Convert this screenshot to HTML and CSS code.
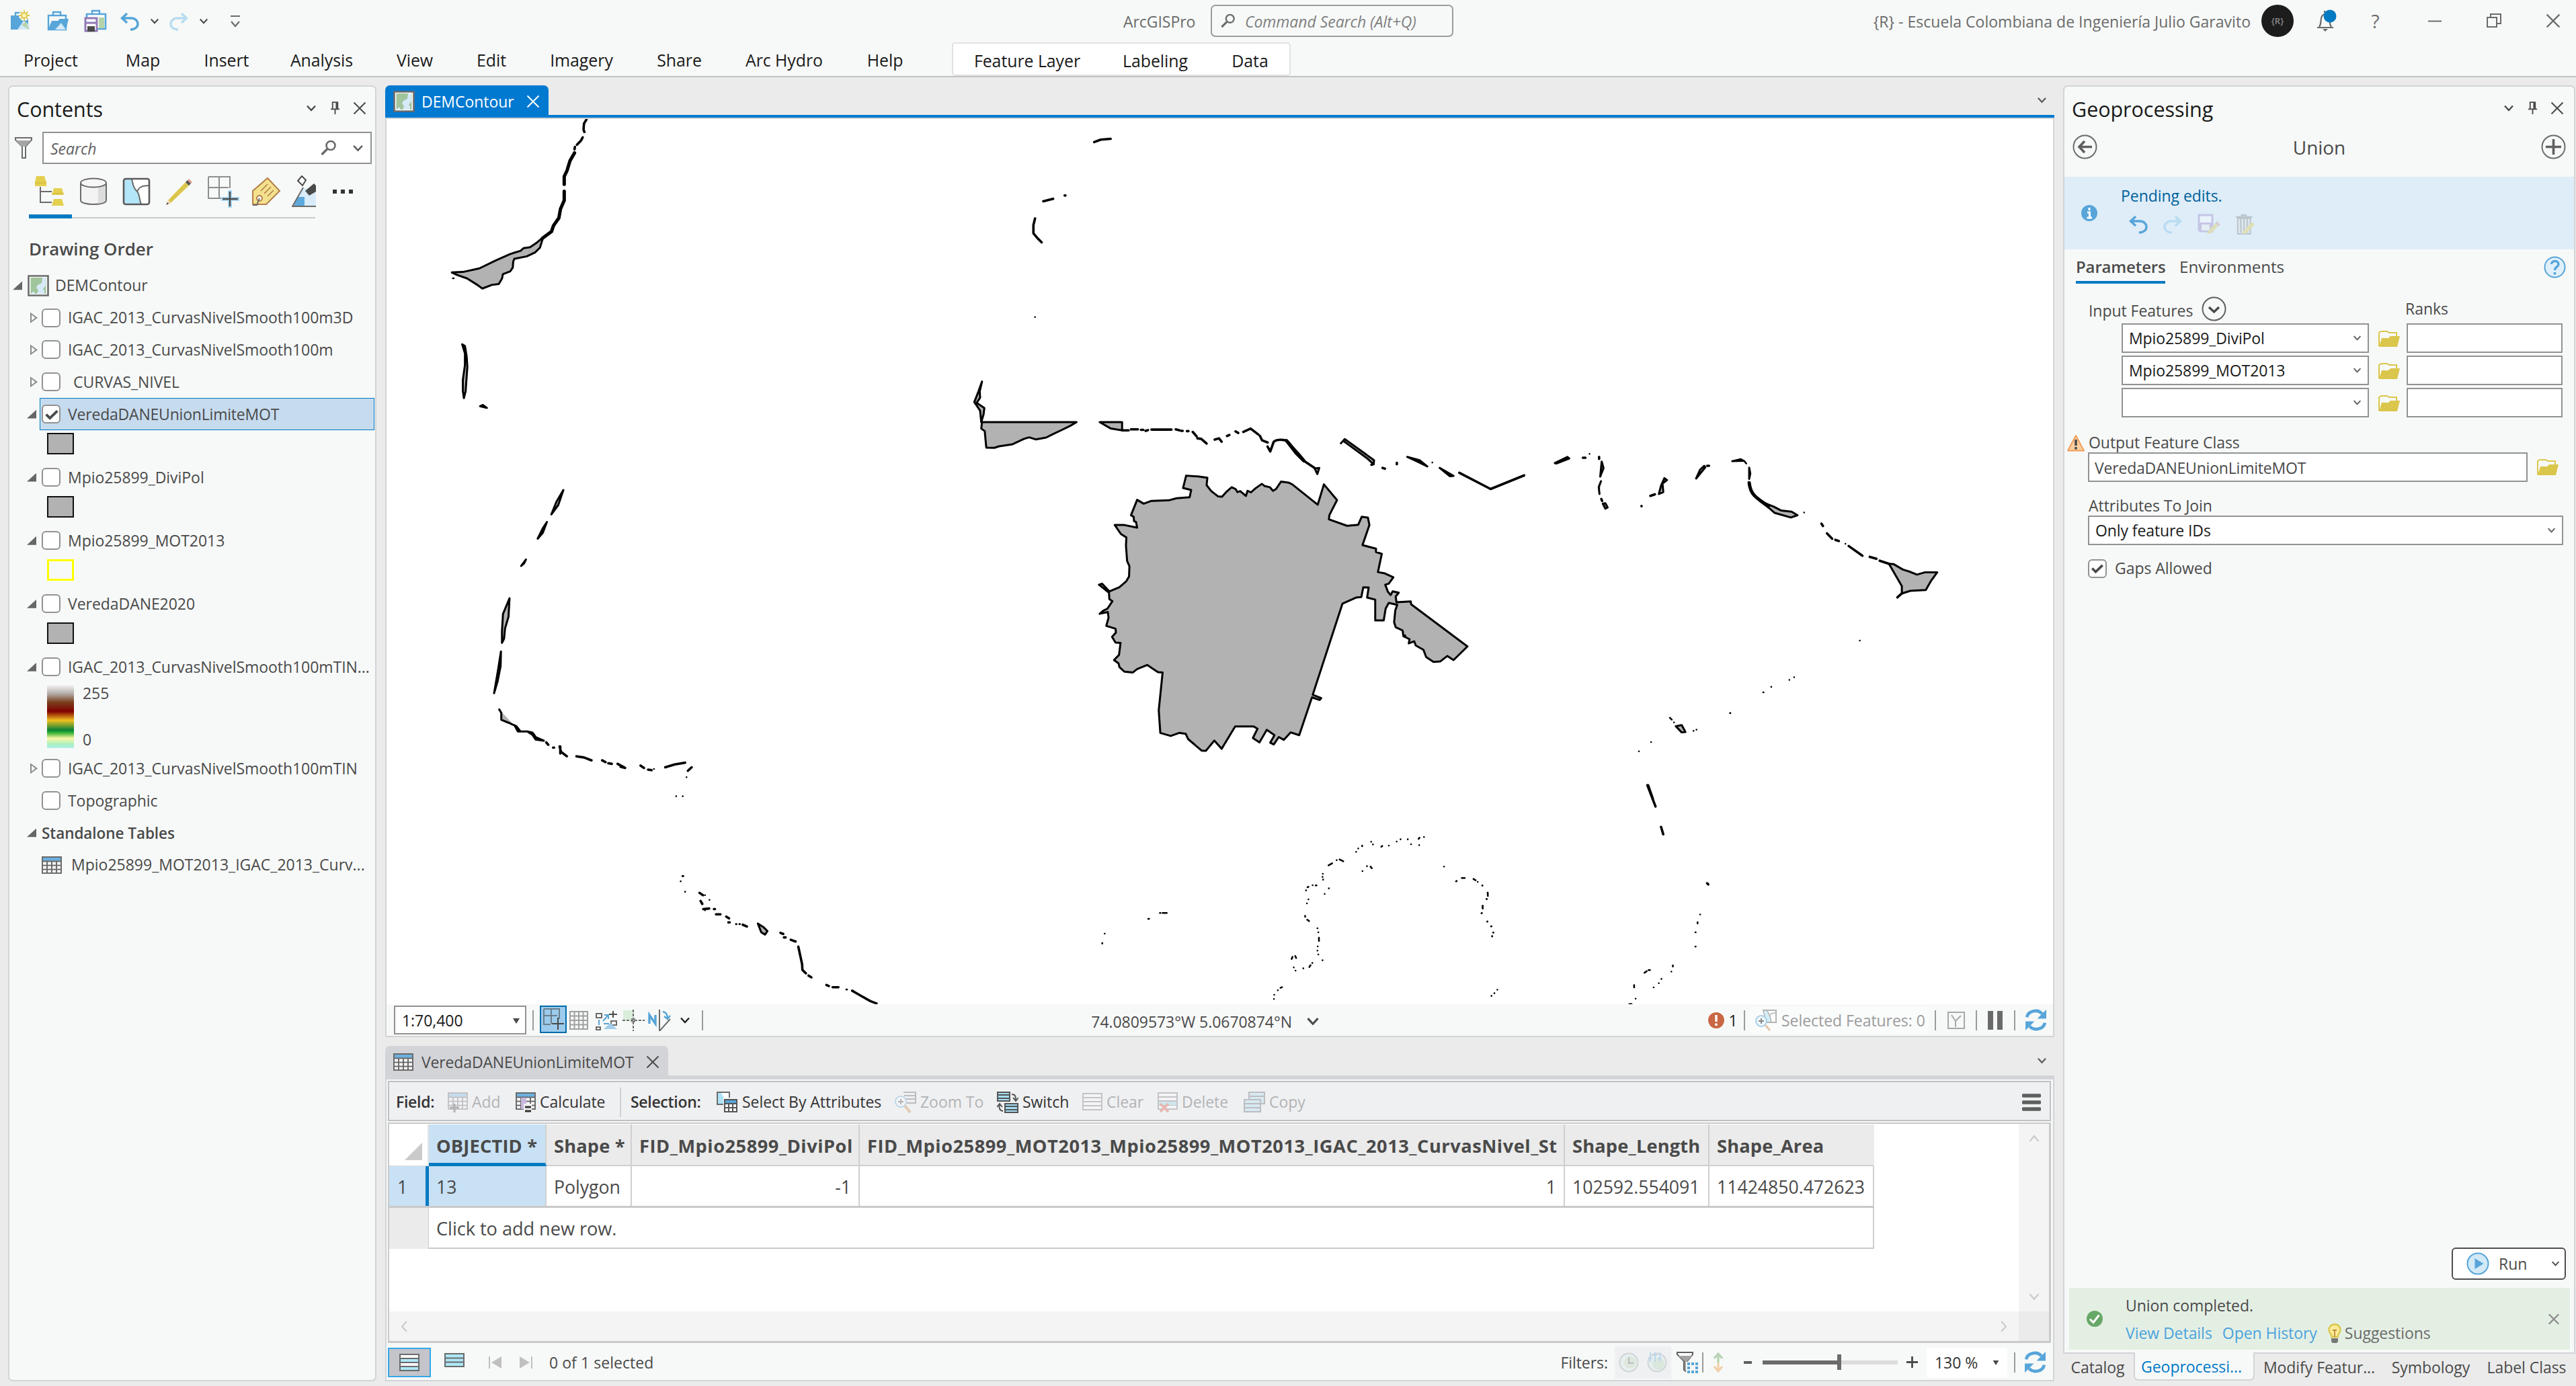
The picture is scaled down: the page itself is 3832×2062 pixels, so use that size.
FILE: index.html
```html
<!DOCTYPE html>
<html lang="en">
<head>
<meta charset="utf-8">
<title>ArcGISPro</title>
<link rel="stylesheet" href="styles.css">
</head>
<body>
<svg class="defs" aria-hidden="true">
  <symbol id="chev" viewBox="0 0 16 12"><path d="M2 2.5l6 6.5 6-6.5" fill="none" stroke="currentColor" stroke-width="2.4"/></symbol>
  <symbol id="close" viewBox="0 0 20 20"><path d="M1.5 1.5l17 17M18.5 1.5l-17 17" fill="none" stroke="currentColor" stroke-width="2"/></symbol>
  <symbol id="pin" viewBox="0 0 16 22"><path d="M4 12V2h8v10M1 13h14M8 13v8M10 2v10" fill="none" stroke="currentColor" stroke-width="2"/></symbol>
  <symbol id="caret" viewBox="0 0 10 8"><path d="M0 0h10L5 8z" fill="#4a4a4a"/></symbol>
  <symbol id="mag" viewBox="0 0 24 24"><circle cx="15" cy="8.500" r="6.500" fill="none" stroke="#6b6b6b" stroke-width="2.600"/><path d="M10 13.500L1.500 22" stroke="#6b6b6b" stroke-width="3.400"/></symbol>
  <symbol id="undo" viewBox="0 0 28 28"><path d="M10 2L2.500 9l7.500 7M3 9h13c13 0 14 17-1 17" fill="none" stroke="#57a5d9" stroke-width="3.400"/></symbol>
  <symbol id="redo" viewBox="0 0 28 28"><path d="M18 2l7.500 7-7.500 7M25 9H12C-1 9-2 26 13 26" fill="none" stroke="#b9dcf1" stroke-width="3.400"/></symbol>
  <symbol id="mapico" viewBox="0 0 32 32"><path d="M1.500 1.500h29v29h-29z" fill="#fff" stroke="#6b6b6b" stroke-width="2.600"/><path d="M4.500 4h23v24h-23z" fill="#a0c49c"/><path d="M22 4l-1 8-6 3-2 4 3 4-2 5h-3l-2-4-4 4h20v-5l-2-2 4-5V4z" fill="#d5e9f7"/></symbol>
  <symbol id="table" viewBox="0 0 30 26"><path d="M1 1h28v24H1z" fill="#fff"/><path d="M2 2h26v5H2z" fill="#6cb0e0"/><path d="M1 1h28v24H1zM1 7.500h28M1 13.500h28M1 19.500h28M8 7v18M15 7v18M22 7v18" fill="none" stroke="#6b6b6b" stroke-width="2"/></symbol>
  <symbol id="rows" viewBox="0 0 30 26"><path d="M1 1h28v24H1z" fill="#fff"/><path d="M1 1h28v24H1zM1 7h28M1 13h28M1 19h28" fill="none" stroke="#6b6b6b" stroke-width="2"/></symbol>
  <symbol id="folder" viewBox="0 0 32 26"><path d="M1 24V4l3-2h9l3 2h11v5" fill="none" stroke="#dbc64c" stroke-width="2"/><path d="M1 25L5 12h10l3-3h14l-4 16z" fill="#dbc64c"/></symbol>
  <symbol id="refresh" viewBox="0 0 32 32"><path d="M3 12C5 2 19 0 25 7" fill="none" stroke="#57a5d9" stroke-width="4.500"/><path d="M31 1v13H18z" fill="#57a5d9"/><path d="M29 20C27 30 13 32 7 25" fill="none" stroke="#57a5d9" stroke-width="4.500"/><path d="M1 31V18h13z" fill="#57a5d9"/></symbol>
  <symbol id="tick" viewBox="0 0 28 28"><path d="M5 13.500l6 6L23 8" fill="none" stroke="#4a4a4a" stroke-width="4.200"/></symbol>
</svg>

<header class="titlebar">
  <div class="quick">
    <svg width="32" height="32" viewBox="0 0 32 32"><path d="M2 8h26v21H2z" fill="#57a5d9"/><path d="M9 8V4h11v4" fill="none" stroke="#57a5d9" stroke-width="2.400"/><path d="M12 29l9-13 9 6v7z" fill="#d3e9f7"/><path d="M18 22l7-5 4 12z" fill="#b5d3a8"/><circle cx="22" cy="8" r="8" fill="#f7f9f8"/><circle cx="22" cy="8" r="4" fill="#fbf3b4" stroke="#dbc64c" stroke-width="2"/><path d="M22 0v3M22 13v3M14 8h3M27 8h3M16.500 2.500l2 2M27.500 2.500l-2 2M16.500 13.500l2-2M27.500 13.500l-2-2" stroke="#dbc64c" stroke-width="1.800"/></svg>
    <svg width="32" height="32" viewBox="0 0 32 32"><path d="M2 8h26v21H2z" fill="#f7f9f8" stroke="#57a5d9" stroke-width="2.400"/><path d="M9 8V3h11v5" fill="none" stroke="#57a5d9" stroke-width="2.400"/><path d="M1 30l6-14h9l3-3h13l-4 17z" fill="#57a5d9"/><path d="M12 29l9-10 7 10z" fill="#d3e9f7"/></svg>
    <svg width="34" height="34" viewBox="0 0 34 34"><path d="M4 7h28v22H4z" fill="#fff" stroke="#57a5d9" stroke-width="2.600"/><path d="M12 7V2h11v5" fill="none" stroke="#57a5d9" stroke-width="2.400"/><path d="M22 12h8v16h-8z" fill="#b5d3a8"/><path d="M2 13h17v19H2z" fill="#fff" stroke="#9179b8" stroke-width="3"/><path d="M3 20h15" stroke="#9179b8" stroke-width="3"/><path d="M5 25h11v8H5z" fill="#4a4a4a"/></svg>
    <svg class="qu" width="28" height="28"><use href="#undo"/></svg>
    <svg class="qc" width="14" height="11"><use href="#chev"/></svg>
    <svg class="qr" width="28" height="28"><use href="#redo"/></svg>
    <svg class="qc" width="14" height="11"><use href="#chev"/></svg>
    <svg class="qm" width="16" height="20" viewBox="0 0 16 20"><path d="M1 2h14M2 10l6 7 6-7" fill="none" stroke="#6b6b6b" stroke-width="2.200"/></svg>
  </div>
  <div class="command">
    <span>ArcGISPro</span>
    <div class="cmdsearch"><svg width="22" height="22"><use href="#mag"/></svg><em>Command Search (Alt+Q)</em></div>
  </div>
  <div class="account">
    <span>{R} - Escuela Colombiana de Ingeniería Julio Garavito</span>
    <b class="avatar">{R}</b>
    <i class="bell"><svg width="34" height="34" viewBox="0 0 34 34"><path d="M5 27h24M8 26c3-4 2-8 3-13 2-8 10-8 12 0 1 5 0 9 3 13M16 5V2" fill="none" stroke="#6b6b6b" stroke-width="2.200"/><path d="M13 29h8l-4 4z" fill="#6b6b6b"/><circle cx="24" cy="10" r="9.500" fill="#007ac2"/></svg></i>
    <i class="help">?</i>
    <i class="min"><svg width="20" height="3" viewBox="0 0 20 3"><path d="M0 1.500h20" stroke="#6b6b6b" stroke-width="2"/></svg></i>
    <i class="res"><svg width="22" height="22" viewBox="0 0 22 22"><path d="M1 6h14v14H1zM6 6V1h15v14h-6" fill="none" stroke="#6b6b6b" stroke-width="2"/></svg></i>
    <i class="cls"><svg width="22" height="22"><use href="#close"/></svg></i>
  </div>
</header>
<nav class="ribbon">
  <span>Project</span><span>Map</span><span>Insert</span><span>Analysis</span><span>View</span><span>Edit</span><span>Imagery</span><span>Share</span><span>Arc Hydro</span><span>Help</span>
  <div class="context"><span>Feature Layer</span><span>Labeling</span><span>Data</span></div>
</nav>

<main class="workspace">
  <aside class="pane contents">
    <div class="panehead"><h2>Contents</h2><svg width="16" height="12"><use href="#chev"/></svg><svg width="15" height="21"><use href="#pin"/></svg><svg width="20" height="20"><use href="#close"/></svg></div>
    <div class="searchrow">
      <svg width="28" height="34" viewBox="0 0 28 34"><path d="M2 2h24v3l-9 10v17h-5V15L2 5z" fill="#fff" stroke="#6b6b6b" stroke-width="2"/><path d="M3 6h22l-8 9h-6z" fill="#a5a5a5"/></svg>
      <div class="search"><em>Search</em><svg width="24" height="24"><use href="#mag"/></svg><svg width="17" height="13"><use href="#chev"/></svg></div>
    </div>
    <div class="views">
      <div class="active"><svg width="46" height="46" viewBox="0 0 46 46"><path d="M3 0h12l3 9v6H1V9zM29 18h12l3 10H26zM29 34h12l3 10H26z" fill="#e5cf4f"/><path d="M1 10h17M26 26h18" stroke="#c9b43e"/><path d="M9 16v23h17M9 23h17" fill="none" stroke="#6b6b6b" stroke-width="2"/></svg></div>
      <div><svg width="42" height="42" viewBox="0 0 42 42"><path d="M2 8v26c0 8 38 8 38 0V8" fill="#f3f3f3" stroke="#6b6b6b" stroke-width="2"/><path d="M28 14v25c7-1 11-3 11-6V10z" fill="#dcdcdc"/><ellipse cx="21" cy="8" rx="19" ry="6.500" fill="#f7f7f7" stroke="#6b6b6b" stroke-width="2"/></svg></div>
      <div><svg width="42" height="42" viewBox="0 0 42 42"><rect x="2" y="2" width="38" height="38" rx="3" fill="#fff"/><path d="M3 3h11c3 10 3 14 8 18 4 4 3 12 6 19H3z" fill="#b3e6f8"/><path d="M14 2c2 10 3 14 8 19 4 4 3 12 6 19M22 21c3-7 8-9 18-9" fill="none" stroke="#6b6b6b" stroke-width="2"/><rect x="2" y="2" width="38" height="38" rx="3" fill="none" stroke="#5a5a5a" stroke-width="2.600"/></svg></div>
      <div><svg width="42" height="42" viewBox="0 0 42 42"><path d="M4 34L31 6l5 5L8 38z" fill="#dbc64c"/><path d="M4 33l5 5-8 3z" fill="#f2d6b0"/><path d="M1 41l4-2-2-2z" fill="#444"/><path d="M30 7l3-3 5 5-3 3z" fill="#555"/><path d="M33 4l2-2 5 5-2 2z" fill="#e79a8c"/></svg></div>
      <div><svg width="48" height="48" viewBox="0 0 48 48"><path d="M2 2h32v17M2 2v32h20M2 18h30M18 2v32" fill="none" stroke="#8e8e8e" stroke-width="2"/><path d="M34 22v26M21 35h27" stroke="#abd9f5" stroke-width="6"/><path d="M34 24v22M23 35h23" stroke="#4a4a4a" stroke-width="2.400"/></svg></div>
      <div><svg width="44" height="44" viewBox="0 0 44 44"><path d="M2 21L24 2l18 19-20 20H2z" fill="#f3e18e" stroke="#b5804a" stroke-width="2"/><path d="M14 21l10-10M19 25l10-10M24 29l9-9" stroke="#b5804a" stroke-width="1.600"/><circle cx="12" cy="32" r="4" fill="#fff" stroke="#b5804a" stroke-width="2"/><path d="M12 32l-4 10-6 0" fill="none" stroke="#6b6b6b" stroke-width="2"/></svg></div>
      <div><svg width="36" height="48" viewBox="0 0 36 48"><path d="M17 19L2 46h34V19z" fill="#d9ebf8"/><path d="M9 32h10v13H3z" fill="#5da9dd"/><path d="M17 18L1 46h35" fill="none" stroke="#6b6b6b" stroke-width="2"/><path d="M15 1l6 6-5 8-7-7z" fill="#fff" stroke="#4a4a4a" stroke-width="2"/><path d="M20 23L33 12l3 3v9l-10 6z" fill="#4a4a4a"/></svg></div>
      <div><svg width="32" height="8" viewBox="0 0 32 8"><path d="M1 1h6v6H1zM13 1h6v6h-6zM25 1h6v6h-6z" fill="#333"/></svg></div>
    </div>
    <div class="viewline"><i></i></div>
    <h3>Drawing Order</h3>
    <ul class="tree">
      <li class="root"><i class="tri open"></i><svg width="32" height="32"><use href="#mapico"/></svg><span>DEMContour</span></li>
      <li><i class="tri shut"></i><i class="cb"></i><span>IGAC_2013_CurvasNivelSmooth100m3D</span></li>
      <li><i class="tri shut"></i><i class="cb"></i><span>IGAC_2013_CurvasNivelSmooth100m</span></li>
      <li><i class="tri shut"></i><i class="cb"></i><span class="pad">CURVAS_NIVEL</span></li>
      <li class="sel"><i class="tri open"></i><i class="cb"><svg width="26" height="26"><use href="#tick"/></svg></i><span>VeredaDANEUnionLimiteMOT</span></li>
      <li class="sw"><i></i></li>
      <li><i class="tri open"></i><i class="cb"></i><span>Mpio25899_DiviPol</span></li>
      <li class="sw"><i></i></li>
      <li><i class="tri open"></i><i class="cb"></i><span>Mpio25899_MOT2013</span></li>
      <li class="sw yellow"><i></i></li>
      <li><i class="tri open"></i><i class="cb"></i><span>VeredaDANE2020</span></li>
      <li class="sw"><i></i></li>
      <li><i class="tri open"></i><i class="cb"></i><span>IGAC_2013_CurvasNivelSmooth100mTIN...</span></li>
      <li class="ramp"><i></i><div><span>255</span><span>0</span></div></li>
      <li><i class="tri shut"></i><i class="cb"></i><span>IGAC_2013_CurvasNivelSmooth100mTIN</span></li>
      <li><i class="tri"></i><i class="cb"></i><span>Topographic</span></li>
      <li class="head"><i class="tri open"></i><span>Standalone Tables</span></li>
      <li class="tbl"><svg width="30" height="26"><use href="#table"/></svg><span>Mpio25899_MOT2013_IGAC_2013_Curv...</span></li>
    </ul>
  </aside>

  <section class="center">
    <div class="tabs maptabs"><div class="tab"><svg width="32" height="32"><use href="#mapico"/></svg><span>DEMContour</span><svg width="20" height="20"><use href="#close"/></svg></div><svg class="more" width="15" height="12"><use href="#chev"/></svg></div>
    <div class="mapview">
      <svg class="map" viewBox="575 177 2479 1317">
        <g class="shape" transform="translate(0 0) scale(.6122 .3571)">
          <path d="M1098 1135L1125 1133 1165 1118 1205 1085 1240 1058 1265 1045 1272 1034 1288 1030 1305 1010 1320 988 1316 1010 1312 1032 1300 1052 1280 1068 1250 1078 1247 1090 1246 1115 1240 1130 1222 1142 1220 1160 1212 1183 1195 1187 1172 1202 1160 1187 1135 1160 1110 1145z"/>
          <path class="l w5" d="M1318 993L1340 965 1345 940 1358 908 1362 870 1371 835 1371 797M1371 768L1371 735 1378 710 1385 670 1396 637"/>
          <path class="l" d="M1396 622l1-10M1402 603L1412 585 1416 572M1420 550L1418 540 1419 515 1425 498"/>
        </g>
        <g class="shape" transform="translate(560 160) scale(.5102 .861)">
          <path d="M250 409L258 412 263 430 265 448 260 490 255 502 252 490 252 470 258 445 258 425zM302 516L310 514 322 519z"/>
          <path d="M545 661L530 687 510 703 525 681zM497 716L485 735 470 745 484 728zM436 781L430 788 422 792zM388 848L385 880 375 900 372 918 366 925 366 905 369 875zM363 940L362 965 353 992 343 1012 355 970z"/>
          <path d="M358 1040L364 1046 364 1058 385 1063 408 1069 420 1078 412 1078 404 1069M420 1078L440 1078 455 1080 465 1088 488 1094 464 1092 455 1084 440 1078M1112 1410L1128 1416 1140 1423 1133 1429 1122 1425z"/>
          <path class="l" d="M495 1097l6 4M515 1106h3M534 1104L538 1113 555 1121M536 1104v12M583 1121L605 1123 627 1128M658 1128L668 1131M676 1133L686 1134M703 1134L725 1141 712 1139M770 1137L780 1141M792 1144L802 1145M842 1140L870 1135 900 1132M908 1146L919 1140"/>
          <path class="l" d="M942 1357L952 1361M945 1371l5 5M953 1385L970 1384M984 1385h3M990 1394h13M1020 1398l8 3M1026 1408h4M1068 1412L1080 1415M1178 1426l8 2M1188 1434l5 0M1208 1438L1222 1441M1230 1450L1241 1480 1242 1490 1252 1496M1260 1500l8 3M1312 1516l7 2M1330 1520h17M1387 1526L1410 1534 1440 1544 1458 1548"/>
          <path class="l s" d="M809 1143h0M904 1157h0M874 1190h0M893 1190h0M892 1328h3M887 1337h0M900 1355h0M958 1361h0M971 1369h0M958 1387h0M1048 1411h2M1058 1411h2M1370 1524h2M223 295h2"/>
        </g>
        <g class="shape" transform="scale(2.444)">
          <path class="l" d="M666 86.500L670 85 676 84.500M630 133l-1 4v5l2.500 3 2.500 2.500M635 122.500l6-1.500M648 119h.500"/>
          <path class="l s" d="M630 193h0"/>
        </g>
        <g class="shape" transform="translate(1400 540) scale(.574 .3827)">
          <path d="M106 230L351 230 335 244 316 258 288 278 272 290 245 297 228 289 215 295 185 316 150 324 138 330 117 329 113 265 104 255zM411 230H469V262L440 255z"/>
          <path d="M106 72L100 110 101 135 92 155 112 175 110 200 104 230 101 185 86 152 97 110z"/>
          <path d="M635 438L665 441 690 446 688 475 700 498 718 519 728 520 740 500 753 483 763 490 768 502 775 498 786 512 790 517 794 497 803 503 815 487 831 470 838 478 852 483 860 497 868 490 881 461 900 465 910 472 976 551 992 472 1026 533 1006 592 1005 608 1052 633 1081 629 1090 598 1106 601 1110 630 1092 708 1127 722 1127 735 1142 742 1132 813 1150 818 1172 833 1160 858 1151 862 1158 890 1165 902 1170 888 1186 893 1178 908 1180 930 1217 927 1218 938 1364 1102 1328 1155 1312 1139 1294 1160 1276 1162 1257 1143 1250 1115 1230 1098 1226 1082 1212 1090 1214 1074 1198 1062 1196 1040 1178 1027 1174 1008 1177 962 1182 940 1160 933 1152 955 1147 1001H1125V920L1104 912 1108 873 1094 872 1089 910 1075 912 1040 936 963 1290 985 1303 981 1310 961 1300 928 1447 906 1436 888 1465 875 1454 862 1483 853 1476 864 1447 844 1426 825 1475 808 1458 820 1422 810 1413H762L727 1500 708 1468 686 1508 675 1507 640 1462 634 1442 617 1438 595 1450 568 1438 564 1350 574 1203 562 1202 534 1174 508 1190 497 1203 475 1200 462 1182 460 1168 448 1155 461 1135 465 1088 452 1087 443 1065 453 1048 452 1033 428 1022 434 990 432 968 411 975 420 963 431 955 444 926 436 918 435 893 409 862 417 858 436 888 462 872 480 848 487 830 488 790 482 770 479 710 480 678 466 665 450 630 475 630 508 640 505 618 500 615 499 598 492 592 508 532 525 547 545 536 590 534 610 526 644 522 648 494 627 486z"/>
          <path class="l" d="M470 262H486M492 258H510M518 260H524M530 264l6-3M545 259H597M608 258L618 262M622 264h4M637 265H641M652 268L662 285M664 293l10 2 14 18M709 298L720 293 727 306M741 284l6-4M763 266l7 6M783 268L802 255 822 278M826 283l6 18 14 8M846 325L853 344 862 306C873 294 895 298 900 308L925 355 938 378 968 408"/>
          <path class="w5" d="M895 302L908 325 930 362 940 380 920 350z"/>
          <path d="M968 410L980 408 975 432z"/>
          <path d="M1036 312L1046 296 1122 378 1121 394 1105 372 1045 306M1208 365L1240 378 1260 402 1235 384zM1292 408L1328 439 1318 440z"/>
          <path class="l" d="M1115 396h2M1144 408l6 3M1181 388v6M1343 427L1424 490 1511 437M1202 1060v4"/>
          <path class="l s" d="M1273 387h0"/>
        </g>
        <g class="shape" transform="translate(2200 600) scale(.5485 .574)">
          <path d="M206 155L240 139 245 143 210 156zM333 151L338 168 329 190 331 170zM331 202l-6 15 2 18M336 260L343 259 349 270 343 273zM488 235L494 213 503 194 510 199 498 208 500 230zM589 195L600 172 611 162 614 166zM687 150L710 145 718 149zM733 167L736 182 733 196zM763 254L800 268 820 278 848 281 864 290 846 296 802 284 785 270z"/>
          <path class="l w5" d="M733 206C736 235 750 245 785 266"/>
          <path class="l" d="M282 141h7M326 139v5M332 248l2 5M441 266v1M465 240l12-4M619 162h5M929 312l4 6M944 337L958 351M967 354l9 3M1003 370L1040 395M1060 398L1078 403M1087 408L1112 416M457 990L479 1045M459 990L472 1026M494 1098L500 1117M619 1244l3 3M1148 492l-13 11"/>
          <path d="M1112 416L1125 417 1150 431 1167 436 1188 444 1210 438 1243 438 1225 462 1212 484 1170 486 1147 493 1147 474zM534 837L550 834 560 852 550 853z"/>
          <path class="l s" d="M300 131h0M720 150l5 6M882 283h0M994 364h0M1033 615h0M842 717h0M855 710h0M793 735h0M771 749h1M681 803h1M518 815l5 5M529 827h0M582 849h0M590 846h0M467 878h0M434 902h0M9 1250h0M24 1269v6M21 1285h0M10 1303v5M7 1322h0M23 1343h0M33 1356h0M39 1372h0M36 1382h0M600 1325h0M593 1345v3M587 1371h1M587 1408h1M526 1457v3M522 1473h0M449 1476l6-4M460 1469h4M421 1508v6M495 1492h0M488 1503h0M474 1514h0M425 1543h0M408 1557h6M50 1520h0M42 1529h0M34 1536h0"/>
        </g>
        <g class="shape" transform="translate(1600 1200) scale(.4464 .3333)">
          <path class="l s" d="M97 567h0M89 609v2M242 501h3M281 475h2M290 475h14M843 262l12-9M870 239h0M880 236l12 8M935 202h0M942 187h0M955 174v3M985 157h0M991 169h0M1019 179l3-3M1044 174h0M1070 156h0M1083 146h0M1107 146h0M1143 144l3-5M1161 136h0M1118 168h0M1145 172h0M971 266h0M983 268l4 7M956 288h0M824 300h0M823 314h0M825 326h0M768 374h0M773 360l3-2M790 351h0M800 352h3M844 365h0M830 390h0M776 414h0M771 432h0M765 488v4M772 505l6 6M806 543h0M809 561h0M811 585v15M807 624h0M806 643h0M809 660h0M823 686h0M720 680l3-9M732 667l3 9M727 718h0M733 732h0M759 722h0M779 716l4-8M789 698h0M683 809l5-3M674 820h0M662 840h0M661 859h0M1228 268h0M1268 334l2-2M1287 319h10M1326 323l7 6M1340 336h0M1356 352h0M1373 384h0M1374 399h0M1370 413h0M1357 443h0M1357 455h0M1354 475h0M1372 514h0M1386 534h0M1392 562h0M1388 578h0"/>
        </g>
      </svg>
    </div>
    <div class="mapstatus">
      <div class="scale"><span>1:70,400</span><svg width="10" height="8"><use href="#caret"/></svg></div>
      <i class="sep s1"></i>
      <div class="snap"><svg width="34" height="36" viewBox="0 0 34 36"><path d="M3 3h23v15M3 3v23h10M3 13h20M14 3v22" fill="none" stroke="#6b7f8c" stroke-width="2"/><path d="M24 16v18M15 25h18" stroke="#4a4a4a" stroke-width="2"/></svg></div>
      <svg class="g1" width="28" height="28" viewBox="0 0 28 28"><path d="M1 1h26v26H1zM1 7.500h26M1 14h26M1 20.500h26M7.500 1v26M14 1v26M20.500 1v26" fill="none" stroke="#a0a0a0" stroke-width="2"/></svg>
      <svg class="g2" width="34" height="30" viewBox="0 0 34 30"><path d="M1 5h8v6H1zM23 16h8v6h-8zM1 25h6v4H1z" fill="#fff" stroke="#6b6b6b" stroke-width="2"/><path d="M20 6h12M26 1v10" stroke="#4a4a4a" stroke-width="2"/><path d="M11 16l8-9M13 7h6v6M5 14v8M12 20h8" fill="none" stroke="#57a5d9" stroke-width="2"/><path d="M12 28l10-9 10 9z" fill="#9fcdea"/></svg>
      <svg class="g3" width="34" height="32" viewBox="0 0 34 32"><path d="M1 1h16v14H1z" fill="#d9eeda"/><path d="M16 0v32" stroke="#6b6b6b" stroke-width="2" stroke-dasharray="4 2"/><path d="M0 16h33" stroke="#6b6b6b" stroke-width="2" stroke-dasharray="4 2"/><path d="M13 13h6v6h-6z" fill="#888"/></svg>
      <svg class="g4" width="36" height="32" viewBox="0 0 36 32"><path d="M2 21V8l9 13V8" fill="none" stroke="#57a5d9" stroke-width="3.400"/><path d="M17 0v32M17 32L33 14" stroke="#6b6b6b" stroke-width="2"/><path d="M22 3c5 1 7 5 7 10M24 10l5 4 4-5" fill="none" stroke="#57a5d9" stroke-width="2.400"/></svg>
      <svg class="g5" width="16" height="12"><use href="#chev"/></svg>
      <i class="sep s2"></i>
      <span class="coord">74.0809573°W 5.0670874°N</span>
      <svg class="g6" width="20" height="15"><use href="#chev"/></svg>
      <svg class="err" width="26" height="26" viewBox="0 0 26 26"><circle cx="13" cy="13" r="12" fill="#ca6744"/><path d="M13 5v10M13 17.500v3.500" stroke="#fff" stroke-width="3.400"/></svg>
      <span class="one">1</span><i class="sep s3"></i>
      <div class="selected"><svg width="34" height="32" viewBox="0 0 34 32"><path d="M13 1h19v18H18z" fill="#fff" stroke="#b4b4b4" stroke-width="2"/><path d="M14 2h6l3 8 2 8h-7z" fill="#d5eff8"/><path d="M22 9c2-3 5-4 9-4M19 2l4 8 2 9" fill="none" stroke="#b4b4b4" stroke-width="1.600"/><circle cx="10" cy="17" r="8" fill="#eef7fc" stroke="#a7cfe8" stroke-width="2"/><path d="M6 17h8M10 13v8" stroke="#888" stroke-width="2"/><path d="M16 23l7 8" stroke="#e2c7a4" stroke-width="3"/></svg><span>Selected Features: 0</span></div>
      <i class="sep s4"></i>
      <svg class="g7" width="26" height="26" viewBox="0 0 26 26"><path d="M1 1h24v24H1zM6 5l6 9v9M12 14l8-8" fill="none" stroke="#a8a8a8" stroke-width="2"/></svg>
      <i class="sep s5"></i>
      <svg class="g8" width="24" height="28" viewBox="0 0 24 28"><path d="M5 0v28M19 0v28" stroke="#6b6b6b" stroke-width="8"/></svg>
      <i class="sep s6"></i>
      <svg class="g9" width="33" height="33"><use href="#refresh"/></svg>
    </div>

    <div class="tabs tabletabs"><div class="tab"><svg width="30" height="26"><use href="#table"/></svg><span>VeredaDANEUnionLimiteMOT</span><svg width="20" height="20"><use href="#close"/></svg></div><svg class="more" width="15" height="12"><use href="#chev"/></svg></div>
    <div class="tablepane">
      <div class="tools">
        <b>Field:</b>
        <span class="off"><svg width="30" height="30" viewBox="0 0 30 30"><use href="#table" width="30" height="26"/><path d="M10 17v13M3 23h14" stroke="#333" stroke-width="3"/></svg>Add</span>
        <span><svg width="30" height="30" viewBox="0 0 30 30"><use href="#table" width="30" height="26"/><path d="M8 8h8v17H8z" fill="#c9b8de"/><path d="M12 17h12v12H12z" fill="#f2f2f2"/><path d="M14 22h9M14 28h9" stroke="#333" stroke-width="3"/></svg>Calculate</span>
        <i class="sep"></i>
        <b>Selection:</b>
        <span><svg width="32" height="32" viewBox="0 0 32 32"><path d="M1 1h18v18H1z" fill="#fff" stroke="#6b6b6b" stroke-width="2"/><path d="M2 2h5l4 8v8H2z" fill="#aee3f5"/><path d="M10 9h22v23H10z" fill="#f2f3f5"/><path d="M12 12h18v18H12zM12 18h18M12 24h18M18 18v12M24 18v12" fill="#fff" stroke="#555" stroke-width="2"/><path d="M13 13h16v4H13z" fill="#57a5d9"/></svg>Select By Attributes</span>
        <span class="off"><svg width="32" height="32" viewBox="0 0 32 32"><path d="M13 1h18v16H18M14 6h17M17 11h14" fill="none" stroke="#555" stroke-width="2"/><circle cx="9" cy="15" r="8" fill="#fff" stroke="#57a5d9" stroke-width="2"/><path d="M5 15h8M9 11v8" stroke="#333" stroke-width="2"/><path d="M15 21l8 10" stroke="#c08030" stroke-width="4"/></svg>Zoom To</span>
        <span><svg width="32" height="32" viewBox="0 0 32 32"><path d="M1 1h18v13H1zM12 18h19v13H12z" fill="#a5def2" stroke="#555" stroke-width="2"/><path d="M1 5h18M1 10h18M12 22h19M12 27h19" stroke="#555" stroke-width="2"/><path d="M22 4c6 0 6 4 6 9M24 9l4 5 4-5M9 29c-6-1-6-6-5-10M0 23l4-5 4 5" fill="none" stroke="#555" stroke-width="2"/></svg>Switch</span>
        <span class="off"><svg width="30" height="28"><use href="#rows"/></svg>Clear</span>
        <span class="off"><svg width="30" height="30" viewBox="0 0 30 30"><use href="#rows" width="30" height="26"/><path d="M2 14h26v5H2z" fill="#8fd6ee"/><path d="M4 17l12 12M16 17L4 29" stroke="#d8402a" stroke-width="3.600"/></svg>Delete</span>
        <span class="off"><svg width="32" height="32" viewBox="0 0 32 32"><path d="M8 1h23v17H8z" fill="#a5def2" stroke="#555" stroke-width="2"/><path d="M1 12h24v18H1z" fill="#a5def2" stroke="#555" stroke-width="2"/><path d="M8 7h23M1 18h24M1 24h24" stroke="#555" stroke-width="2"/></svg>Copy</span>
        <svg class="menu" width="28" height="28" viewBox="0 0 28 28"><path d="M2 4h24M2 14h24M2 24h24" stroke="#5f5f5f" stroke-width="5.500" stroke-linecap="round"/></svg>
      </div>
      <div class="gridbox">
        <div class="sheet">
          <div class="row hd"><div class="corner"><svg width="26" height="26" viewBox="0 0 26 26"><path d="M26 0v26H0z" fill="#cacaca"/></svg></div><div class="act">OBJECTID *</div><div>Shape *</div><div class="fid">FID_Mpio25899_DiviPol</div><div class="fid">FID_Mpio25899_MOT2013_Mpio25899_MOT2013_IGAC_2013_CurvasNivel_St</div><div>Shape_Length</div><div>Shape_Area</div></div>
          <div class="row dt"><div class="num">1</div><div class="act">13</div><div>Polygon</div><div class="r">-1</div><div class="r">1</div><div>102592.554091</div><div>11424850.472623</div></div>
          <div class="row add"><div class="corner"></div><div>Click to add new row.</div></div>
        </div>
        <div class="vscroll"><svg width="18" height="13" viewBox="0 0 16 12"><path d="M2 10l6-7 6 7" fill="none" stroke="#c9c9c9" stroke-width="2"/></svg><svg width="18" height="13" viewBox="0 0 16 12"><path d="M2 2l6 7 6-7" fill="none" stroke="#c9c9c9" stroke-width="2"/></svg></div>
        <div class="hscroll"><svg width="11" height="17" viewBox="0 0 11 17"><path d="M9 1L2 8.500 9 16" fill="none" stroke="#c9c9c9" stroke-width="2"/></svg><svg width="11" height="17" viewBox="0 0 11 17"><path d="M2 1l7 7.500L2 16" fill="none" stroke="#c9c9c9" stroke-width="2"/></svg></div>
        <div class="scorner"></div>
      </div>
      <div class="foot">
        <div class="allbtn"><svg width="30" height="26" viewBox="0 0 30 26"><use href="#rows"/><path d="M2 8h26v4H2zM2 20h26v4H2z" fill="#aee8f8"/></svg></div>
        <svg class="f1" width="30" height="21" viewBox="0 0 30 21"><path d="M1 1h28v19H1zM1 7.500h28M1 13.500h28" fill="#aee8f8" stroke="#6b6b6b" stroke-width="2"/></svg>
        <svg class="f2" width="20" height="18" viewBox="0 0 20 18"><path d="M1 0v18" stroke="#c0c0c0" stroke-width="2"/><path d="M19 0v18L4 9z" fill="#c0c0c0"/></svg>
        <svg class="f3" width="20" height="18" viewBox="0 0 20 18"><path d="M19 0v18" stroke="#c0c0c0" stroke-width="2"/><path d="M1 0v18l15-9z" fill="#c0c0c0"/></svg>
        <span class="count">0 of 1 selected</span>
        <span class="filters">Filters:</span>
        <div class="fbox"><svg width="30" height="30" viewBox="0 0 30 30"><circle cx="15" cy="15" r="13.500" fill="#e6eff0" stroke="#d2d4d6" stroke-width="2"/><circle cx="17" cy="15" r="9" fill="#dde7dc"/><path d="M15 7v9h7" fill="none" stroke="#b9bcc0" stroke-width="2"/></svg><svg width="30" height="30" viewBox="0 0 30 30"><circle cx="15" cy="15" r="13.500" fill="#e6eff0" stroke="#d2d4d6" stroke-width="2"/><circle cx="17" cy="17" r="9" fill="#dbe6dc"/><path d="M5 0v14M12 0v14M19 0v14M2 9h6M9 4h6M16 9h6" stroke="#bcd9ea" stroke-width="2"/></svg></div>
        <svg class="f4" width="34" height="32" viewBox="0 0 34 32"><path d="M3 1h23v3l-8 10v17l-5-4V14L3 4z" fill="#fff" stroke="#5f5f5f" stroke-width="2"/><path d="M4 6h21l-7 8v16l-4-3V14z" fill="#a3a3a3"/><path d="M16 15h18v17H16z" fill="#f7f9f8"/><path d="M18 18h16M18 24h4M30 24h4M18 30h16" stroke="#57a5d9" stroke-width="4" stroke-dasharray="4 2"/></svg>
        <i class="sep"></i>
        <svg class="f5" width="16" height="30" viewBox="0 0 16 30"><path d="M8 3v12M2 9l6-7 6 7" fill="none" stroke="#b7d2b4" stroke-width="3.200"/><path d="M8 15v12M2 21l6 7 6-7" fill="none" stroke="#f3cfaa" stroke-width="3.200"/></svg>
        <i class="minus"></i>
        <div class="slider"><i></i></div>
        <svg class="plus" width="17" height="17" viewBox="0 0 17 17"><path d="M0 8.500h17M8.500 0v17" stroke="#4a4a4a" stroke-width="2.800"/></svg>
        <div class="pct"><span>130 %</span><svg width="10" height="7"><use href="#caret"/></svg></div>
        <i class="sep p2"></i>
        <svg class="f6" width="33" height="33"><use href="#refresh"/></svg>
      </div>
    </div>
  </section>

  <aside class="rightcol">
    <div class="pane geo">
      <div class="panehead"><h2>Geoprocessing</h2><svg width="16" height="12"><use href="#chev"/></svg><svg width="15" height="21"><use href="#pin"/></svg><svg width="20" height="20"><use href="#close"/></svg></div>
      <div class="toolname">
        <svg width="37" height="37" viewBox="0 0 37 37"><circle cx="18.500" cy="18.500" r="17" fill="none" stroke="#6b6b6b" stroke-width="2"/><path d="M29 18.500H11M18 10l-8 8.500 8 8.500" fill="none" stroke="#5f5f5f" stroke-width="3.600"/></svg>
        <span>Union</span>
        <svg width="37" height="37" viewBox="0 0 37 37"><circle cx="18.500" cy="18.500" r="17" fill="none" stroke="#6b6b6b" stroke-width="2"/><path d="M7 18.500h23M18.500 7v23" stroke="#5f5f5f" stroke-width="3.600"/></svg>
      </div>
      <div class="pending">
        <svg width="24" height="24" viewBox="0 0 24 24"><circle cx="12" cy="12" r="12" fill="#57a5d9"/><path d="M12 4v4M9 11h3.500v7M8.500 19h7.500" fill="none" stroke="#fff" stroke-width="3"/></svg>
        <div><span>Pending edits.</span>
          <div class="edits"><svg width="28" height="28"><use href="#undo"/></svg><svg width="28" height="28"><use href="#redo"/></svg>
          <svg class="faint" width="34" height="32" viewBox="0 0 34 32"><path d="M2 2h20v24H4l-2-2z" fill="#fff" stroke="#9a80c8" stroke-width="3"/><path d="M2 13h20v13H4l-2-2z" fill="#9a80c8"/><path d="M6 16h12v9H6z" fill="#eee"/><path d="M14 30l2-5L29 12l4 4-13 13z" fill="#dbc64c"/><path d="M29 11l5 5-3 3-5-5z" fill="#c99"/></svg>
          <svg class="faint" width="30" height="32" viewBox="0 0 32 34"><path d="M3 7h20v25H3zM0 5h26M9 5V2h7v3M8 8v22M13 8v22M18 8v22" fill="#ddd" stroke="#777" stroke-width="2"/><path d="M10 32l2-5L26 13l4 4-14 14z" fill="#e0cb40"/></svg></div>
        </div>
      </div>
      <div class="gtabs"><b>Parameters</b><span>Environments</span><svg width="33" height="33" viewBox="0 0 33 33"><circle cx="16.500" cy="16.500" r="15" fill="#e0f0fb" stroke="#57a5d9" stroke-width="2"/><path d="M11.500 12c0-6 10.500-6 10.500 0 0 4-5.500 4-5.500 9" fill="none" stroke="#57a5d9" stroke-width="3.400"/><path d="M16.500 24v3.500" stroke="#57a5d9" stroke-width="3.600"/></svg></div>
      <div class="inhead"><span>Input Features</span><svg width="37" height="37" viewBox="0 0 37 37"><circle cx="18.500" cy="18.500" r="17" fill="none" stroke="#5f5f5f" stroke-width="2"/><path d="M11 16l7.500 7 7.500-7" fill="none" stroke="#4a4a4a" stroke-width="3.400"/></svg><span class="ranks">Ranks</span></div>
      <div class="inrow"><div class="combo"><span>Mpio25899_DiviPol</span><svg width="13" height="10"><use href="#chev"/></svg></div><svg width="32" height="26"><use href="#folder"/></svg><div class="rank"></div></div>
      <div class="inrow"><div class="combo"><span>Mpio25899_MOT2013</span><svg width="13" height="10"><use href="#chev"/></svg></div><svg width="32" height="26"><use href="#folder"/></svg><div class="rank"></div></div>
      <div class="inrow"><div class="combo"><span></span><svg width="13" height="10"><use href="#chev"/></svg></div><svg width="32" height="26"><use href="#folder"/></svg><div class="rank"></div></div>
      <div class="outlabel"><svg width="26" height="26" viewBox="0 0 26 26"><path d="M13 2l12 22.500H1z" fill="#fbcf9f" stroke="#f0a05c" stroke-width="2" stroke-linejoin="round"/><path d="M13 8v9M13 19v3.500" stroke="#4a4a4a" stroke-width="3.600"/></svg><span>Output Feature Class</span></div>
      <div class="outrow"><div class="field">VeredaDANEUnionLimiteMOT</div><svg width="32" height="26"><use href="#folder"/></svg></div>
      <div class="attlabel">Attributes To Join</div>
      <div class="combo wide"><span>Only feature IDs</span><svg width="13" height="10"><use href="#chev"/></svg></div>
      <div class="gaps"><i class="cb"><svg width="24" height="24"><use href="#tick"/></svg></i><span>Gaps Allowed</span></div>
      <div class="run"><svg width="34" height="34" viewBox="0 0 34 34"><circle cx="17" cy="17" r="15.500" fill="#d2e9f8" stroke="#57a5d9" stroke-width="2"/><path d="M12.500 9v16l13-8z" fill="#57a5d9"/></svg><span>Run</span><svg width="13" height="10"><use href="#chev"/></svg></div>
      <div class="done">
        <svg width="24" height="24" viewBox="0 0 24 24"><circle cx="12" cy="12" r="12" fill="#67a867"/><path d="M5 12.500l5 5 8.500-11" fill="none" stroke="#fff" stroke-width="3"/></svg>
        <div><span>Union completed.</span><p><a>View Details</a><a>Open History</a><svg width="20" height="30" viewBox="0 0 20 30"><path d="M5.500 20C5 15 1.500 14 1.500 9.500c0-11 17-11 17 0 0 4.500-3.500 5.500-4 10.500z" fill="#fbeb97" stroke="#dbc64c" stroke-width="2.400"/><path d="M10 20v-9M7 10h6" stroke="#c08a3a" stroke-width="1.800"/><path d="M5 22h10v5l-2 2H7l-2-2z" fill="#777"/></svg><span>Suggestions</span></p></div>
        <svg width="20" height="17" class="dx" viewBox="0 0 20 20"><path d="M1.500 1.500l17 17M18.500 1.500l-17 17" stroke="#8a8a8a" stroke-width="2.600"/></svg>
      </div>
    </div>
    <div class="bottomtabs"><span>Catalog</span><span class="on">Geoprocessi...</span><span>Modify Featur...</span><span>Symbology</span><span>Label Class</span></div>
  </aside>
</main>
</body>
</html>
```
FILE: styles.css
```css
* { box-sizing: border-box; }
body {
  margin: 0;
  width: 3832px;
  height: 2062px;
  overflow: hidden;
  display: flex;
  flex-direction: column;
  background: #ebebeb;
  color: #4a4a4a;
  font: 23px/1.3 "Open Sans", "Noto Sans", sans-serif;
  letter-spacing: -.05px;
  white-space: nowrap;
}
i { font-style: normal; display: block; }
svg { display: block; flex: none; }
h2, h3, p, ul { margin: 0; padding: 0; }
b { font-weight: 600; }
.defs { position: absolute; width: 0; height: 0; }

/* Title bar */
.titlebar {
  height: 62px;
  flex: none;
  display: grid;
  grid-template-columns: 1671px 491px 1fr;
  background: #f7f9f8;
  color: #6b6b6b;
}
.quick { display: flex; align-items: center; padding-left: 14px; color: #4a4a4a; }
.quick svg:nth-child(2) { margin-left: 24px; }
.quick svg:nth-child(3) { margin-left: 23px; }
.qu { margin-left: 20px; margin-top: 2px; }
.qc { margin-left: 16px; }
.qr { margin-left: 15px; margin-top: 2px; }
.qm { margin-left: 32px; margin-top: 2px; }
.command { display: flex; justify-content: space-between; align-items: center; }
.command span, .account span { padding-top: 3px; }
.cmdsearch {
  width: 361px;
  height: 48px;
  border: 2px solid #9b9d9c;
  border-radius: 7px;
  display: flex;
  align-items: center;
  gap: 14px;
  padding-left: 13px;
  color: #808080;
}
.cmdsearch em { padding-top: 3px; }
.account { display: flex; align-items: center; justify-content: flex-end; letter-spacing: .02px; }
.account i { display: flex; justify-content: center; }
.avatar {
  width: 48px;
  height: 48px;
  margin-left: 16px;
  border-radius: 50%;
  background: #1c1c1c;
  color: #8b8b8b;
  font-size: 13px;
  display: flex;
  align-items: center;
  justify-content: center;
}
.bell { width: 70px; margin-left: 12px; }
.help { width: 79px; font-size: 28px; }
.min { width: 98px; }
.res { width: 78px; }
.account .cls { width: 83px; padding-left: 14px; }

/* Ribbon tabs */
.ribbon {
  height: 53px;
  flex: none;
  display: grid;
  grid-template-columns: 151px 123px 126px 157px 120px 108px 160px 131px 181px 159px 504px;
  background: #f7f9f8;
  border-bottom: 2px solid #c0c2c6;
  color: #1a1a1a;
  font-size: 24.9px;
  line-height: 54px;
  text-align: center;
}
.ribbon > span:nth-child(10) { padding-right: 40px; }
.context {
  height: 50px;
  margin-top: 1px;
  border: 2px solid #e0e1e1;
  border-radius: 5px;
  background: #fff;
  display: grid;
  grid-template-columns: 220px 161px 121px;
  line-height: 50px;
}

/* Workspace */
.workspace {
  flex: 1;
  min-height: 0;
  display: grid;
  grid-template-columns: 548px 2483px 762px;
  column-gap: 13px;
  padding: 12px 1px 8px 12px;
}
.pane { background: #f7f9f8; border: 2px solid #d2d4d8; border-radius: 7px; }
.panehead { display: flex; align-items: center; height: 66px; padding: 0 13px 0 11px; }
.panehead h2 { flex: 1; font-weight: 400; font-size: 30.5px; color: #1a1a1a; padding-top: 2px; }
.panehead svg { margin-bottom: 3px; }
.panehead svg:nth-of-type(2) { margin: 0 19px 3px 20px; }

/* Contents pane */
.searchrow { display: flex; align-items: center; height: 50px; padding: 0 0 0 7px; gap: 14px; }
.search {
  width: 490px;
  height: 48px;
  border: 2px solid #929292;
  background: #fff;
  display: flex;
  align-items: center;
  padding: 0 10px;
  color: #5f5f5f;
}
.search em { flex: 1; padding-top: 3px; }
.search svg:last-child { margin-left: 23px; }
.views {
  display: grid;
  grid-template-columns: 64px 65px 64px 64px 65px 64px 48px 68px;
  height: 74px;
  padding: 6px 0 0 28px;
  align-items: center;
  justify-items: center;
}
.viewline { width: 426px; height: 6px; margin-left: 29px; border-bottom: 2px solid #cacaca; }
.viewline i { width: 64px; height: 6px; background: #007ac2; }
.contents h3 { font-size: 26px; font-weight: 600; padding: 28px 0 0 29px; line-height: 34px; height: 76px; }
.tree { list-style: none; }
.tree li { height: 47.8px; display: flex; align-items: center; padding-left: 26px; }
.tree li > span { padding-top: 1px; }
.tree li.root { padding-left: 5px; }
.tree .root svg { margin: 0 9px 0 8px; }
.tri { width: 14px; height: 16px; margin-right: 8px; }
.tri.open { background: #666; clip-path: polygon(100% 10%, 100% 90%, 0 90%); }
.root .tri { margin-right: 0; }
.tri.shut { width: 11px; margin: 0 6px 0 5px; background: #8a8a8a; clip-path: polygon(0 0, 100% 50%, 0 100%); padding: 3.500px 3.500px 3.500px 2px; }
.tri.shut::after { content: ""; display: block; height: 9px; background: #f7f9f8; clip-path: polygon(0 0, 100% 50%, 0 100%); }
.cb { width: 28px; height: 28px; flex: none; border: 2px solid #929292; border-radius: 6px; background: #fff; }
.tree .cb + span { padding-left: 11px; }
.tree .cb + .pad { padding-left: 19px; }
.tree li.sel { margin-right: 1px; background: linear-gradient(#c6dbee, #c6dbee) 46px 0 / 497px 100% no-repeat; position: relative; letter-spacing: -.2px; }
.tree li.sel::after { content: ""; position: absolute; left: 45px; right: 0; top: 0; bottom: 0; border: 1.500px solid #007ac2; }
.tree li.sw { height: 46.3px; padding: 4px 0 0 56px; align-items: flex-start; }
.sw i { width: 40px; height: 32px; background: #b2b2b2; border: 2px solid #111; }
.sw.yellow i { background: none; border: 3px solid #ff0; }
.tree li.ramp { height: 103px; padding: 1px 0 0 56px; align-items: flex-start; }
.ramp i { width: 40px; height: 96px; background: linear-gradient(#fff, #b5b0ae 15%, #7a3f1c 29%, #800000 43%, #f0c020 57%, #088238 72%, #30b030 76%, #fbf6a6 85%, #a8f0c0 94%, #b0efe8); }
.ramp div { height: 96px; padding-left: 13px; display: flex; flex-direction: column; justify-content: space-between; }
.ramp span:last-child { margin-bottom: -3px; }
.tree li.head { font-weight: 600; font-size: 22.5px; }
.tree li.tbl { padding-left: 48px; }
.tree li.tbl span { padding-left: 14px; letter-spacing: 0; }

/* Center column */
.center { display: flex; flex-direction: column; min-width: 0; }
.tabs { display: flex; justify-content: space-between; align-items: center; padding-right: 11px; color: #5f5f5f; flex: none; }
.tab { display: flex; align-items: center; align-self: stretch; padding: 0 13px 0 12px; border-radius: 7px 7px 0 0; }
.tab span { flex: 1; padding: 2px 0 0 10px; }
.maptabs { height: 48px; border-bottom: 4px solid #0079d1; }
.maptabs .tab { width: 243px; height: 48px; background: #0079d1; color: #fff; }
.mapview { height: 1319px; border: 2px solid #d2d4d8; border-bottom: 0; background: #fff; flex: none; }
.map { width: 2479px; height: 1317px; }
.shape path { fill: #b2b2b2; stroke: #000; stroke-width: 3; vector-effect: non-scaling-stroke; stroke-linejoin: round; stroke-linecap: round; }
.shape .l { fill: none; stroke-width: 3.600; }
.shape .w5 { stroke-width: 5; }
.shape .s { stroke-width: 2.600; }
.mapstatus {
  height: 49px;
  flex: none;
  display: grid;
  grid-template-columns: 197px 20px 40px 36px 47px 33px 46px 28px 585px 333px 587px 30px 18px 17px 266px 19px 43px 17px 40px 18px 1fr;
  grid-template-rows: 47px;
  align-items: center;
  padding: 0 4px 0 11px;
  background: #f7f9f8;
  border: 2px solid #d2d4d8;
  border-top: 0;
}
.mapstatus > svg { justify-self: center; }
.sep { width: 2px; height: 30px; background: #9b9b9b; justify-self: center; }
.scale { height: 43px; border: 2px solid #929292; background: #fff; display: flex; align-items: center; justify-content: space-between; padding: 2px 8px 0 10px; color: #1a1a1a; }
.snap { width: 40px; height: 41px; background: #9ccbec; border: 2px solid #006bab; display: flex; align-items: center; justify-content: center; margin-top: -3px; }
.mapstatus .s2 { justify-self: start; margin-left: 11px; }
.mapstatus .coord { justify-self: end; padding: 6px 29px 0 0; letter-spacing: -.05px; }
.mapstatus .g6 { justify-self: start; margin: 4px 0 0 -8px; }
.g5 { color: #222; }
.one { color: #1a1a1a; text-align: center; padding: 2px 0 0 2px; }
.selected { height: 40px; background: #fafbfb; display: flex; align-items: center; gap: 6px; padding-left: 7px; color: #9b9b9b; }
.selected span { padding-top: 2px; }

.tabletabs { margin-top: 13px; height: 50px; border-bottom: 6px solid #d2d4d8; }
.tabletabs .tab { width: 421px; background: #d2d4d8; color: #4a4a4a; padding-top: 3px; }
.tabletabs .tab span { padding: 2px 0 0 12px; letter-spacing: -.15px; }
.tablepane { flex: 1; background: #f7f9f8; border: 2px solid #d2d4d8; border-top: 0; padding: 2px 3px 0 2px; display: flex; flex-direction: column; }
.tools {
  height: 60px;
  flex: none;
  border: 2px solid #bfc1c5;
  background: #eff0f2;
  display: grid;
  grid-template-columns: 77px 101px 150px 21px 128px 265px 152px 127px 112px 128px 110px 1fr;
  align-items: center;
  padding: 3px 13px 0 10px;
  color: #333;
}
.tools b { letter-spacing: -.3px; }
.tools span { display: flex; align-items: center; gap: 6px; }
.tools .off { opacity: .32; }
.tools .sep { height: 44px; background: #d0d1d3; justify-self: start; margin-left: 5px; }
.tools .menu { justify-self: end; }
.gridbox {
  margin-top: 2px;
  height: 328px;
  flex: none;
  border: 3px solid #cacaca;
  border-width: 2px 3px 3px 2px;
  display: grid;
  grid-template-columns: 1fr 45px;
  grid-template-rows: 1fr 44px;
  background: #fff;
}
.sheet { font-size: 26.7px; padding-top: 1px; overflow: hidden; }
.row { display: grid; grid-template-columns: 59px 175px 127px 339px 1049px 215px 245px; width: 2209px; }
.row > div { display: flex; align-items: center; padding: 3px 0 0 11px; border-right: 2px solid #cfcfcf; white-space: pre; }
.hd { height: 62px; font-weight: 700; font-size: 27.2px; letter-spacing: .2px; }
.hd > .fid { letter-spacing: .54px; }
.hd > div { background: #ebebeb; border-bottom: 2px solid #cfcfcf; }
.hd > .corner { background: #fff; align-items: flex-end; justify-content: flex-end; padding: 0 8px 8px 0; border-right-color: #e4e4e4; border-bottom: 1px solid #ddd; }
.hd > .act { border-bottom: 5px solid #007ac2; background: #c8e1f5; padding-top: 6px; }
.hd > div:last-child { border-right-color: #ebebeb; }
.dt { height: 62px; border-bottom: 3px solid #c9c9c9; }
.dt > .num { background: #c8e1f5; border-right: 5px solid #007ac2; padding-left: 12px; }
.dt > .act { background: #c8e1f5; }
.dt > .r { justify-content: flex-end; padding-right: 11px; }
.add { height: 61px; grid-template-columns: 59px 2150px; font-size: 27.2px; }
.add > div { border-bottom: 2px solid #c9c9c9; }
.add > .corner { background: #ebebeb; border-right: 1px solid #ccc; border-bottom: 0; }
.vscroll { background: #f4f4f4; display: flex; flex-direction: column; justify-content: space-between; align-items: center; padding: 15px 0; }
.hscroll { background: #f4f4f4; display: flex; justify-content: space-between; align-items: center; padding: 0 17px; }
.scorner { background: #ebebeb; }
.foot {
  flex: 1;
  display: grid;
  grid-template-columns: 64px 70px 62px 48px 1498px 83px 84px 46px 1px 45px 44px 201px 43px 120px 21px 1fr;
  align-items: center;
  padding-top: 2px;
}
.foot > svg { justify-self: center; }
.allbtn { width: 64px; height: 44px; background: #c3c5ca; border: 2px solid #35a7ea; display: flex; align-items: center; justify-content: center; }
.foot .f1, .foot .f2, .foot .f3 { justify-self: start; }
.foot .f1 { margin: 0 0 6px 20px; }
.foot .f2 { margin-left: 16px; }
.foot .f3 { margin-left: -1px; }
.foot .f6 { margin-right: 4px; }
.count { margin-left: -4px; padding-top: 2px; letter-spacing: .05px; }
.foot .filters { justify-self: end; padding: 2px 10px 0 0; }
.fbox { height: 48px; background: #eef0f2; display: flex; align-items: center; justify-content: space-around; }
.minus { width: 12px; height: 4px; background: #5f5f5f; justify-self: center; }
.slider { position: relative; height: 6px; background: linear-gradient(90deg, #6b6b6b 113px, #dcdcdc 113px); }
.slider i { position: absolute; left: 111px; top: -9px; width: 6px; height: 23px; background: #6b6b6b; }
.pct { height: 44px; background: #fff; color: #333; display: flex; align-items: center; justify-content: space-between; padding: 2px 12px 0 12px; }

/* Geoprocessing pane */
.rightcol { display: flex; flex-direction: column; min-width: 0; }
.geo { height: 1887px; display: flex; flex-direction: column; flex: none; border-radius: 7px 7px 0 0; }
.geo .panehead { flex: none; padding: 0 15px 0 11px; }
.toolname { height: 68px; flex: none; display: flex; justify-content: space-between; align-items: flex-start; padding: 5px 12px 0; font-size: 28px; }
.toolname span { padding-top: 1px; }
.pending { height: 108px; flex: none; background: #deedf8; display: flex; align-items: center; padding-left: 25px; gap: 35px; color: #00619b; }
.pending > div { padding-bottom: 8px; }
.pending span { display: block; height: 30px; }
.edits { display: flex; align-items: center; padding: 0 0 0 12px; gap: 23px; height: 32px; margin-top: 11px; }
.faint { opacity: .36; }
.gtabs { height: 67px; flex: none; display: flex; align-items: flex-start; padding: 8px 12px 0 17px; font-size: 24.2px; }
.gtabs b { width: 133px; height: 43px; border-bottom: 4px solid #007ac2; padding-top: 2px; font-size: 24px; letter-spacing: -.15px; }
.gtabs span { flex: 1; padding: 2px 0 0 21px; }
.gtabs svg { margin-top: 2px; }
.inhead { height: 43px; flex: none; display: flex; align-items: center; padding-left: 36px; }
.inhead span:first-child { width: 168px; padding-top: 6px; }
.ranks { padding-left: 266px; }
.inrow { height: 48px; flex: none; display: grid; grid-template-columns: 368px 56px 232px; align-items: start; padding-left: 85px; color: #1a1a1a; }
.inrow > svg { margin: 10px 0 0 14px; }
.combo { height: 44px; background: #fff; border: 2px solid #929292; display: flex; align-items: center; justify-content: space-between; padding: 0 9px; color: #1a1a1a; }
.combo span { padding-top: 2px; letter-spacing: -.1px; }
.combo svg { color: #5f5f5f; }
.rank { height: 44px; background: #fff; border: 2px solid #929292; }
.outlabel { display: flex; align-items: center; height: 48px; flex: none; padding: 20px 0 0 4px; gap: 6px; }
.outrow { height: 44px; flex: none; display: flex; align-items: center; gap: 14px; padding-left: 35px; }
.field { width: 654px; height: 44px; border: 2px solid #929292; background: #fff; padding: 0 8px; line-height: 42px; letter-spacing: -.2px; }
.attlabel { height: 50px; flex: none; padding: 21px 0 0 36px; }
.combo.wide { margin-left: 35px; width: 707px; flex: none; }
.gaps { display: flex; align-items: center; padding: 20px 0 0 35px; gap: 12px; height: 50px; flex: none; }
.run { margin: auto 12px 12px auto; width: 170px; height: 48px; flex: none; border: 2px solid #4f4f4f; border-radius: 6px; background: #fff; display: flex; align-items: center; padding: 0 7px 0 20px; }
.run span { flex: 1; padding: 2px 0 0 14px; }
.done { height: 92px; flex: none; margin: 0 6px 4px 7px; background: #e4efe4; display: flex; align-items: center; padding: 0 14px 0 26px; }
.done > div { flex: 1; padding: 8px 0 0 34px; }
.done p { display: flex; align-items: center; height: 40px; color: #6b6b6b; margin-top: 2px; }
.done div > span { display: block; height: 34px; }
.done a { color: #4ba3dc; margin-right: 15px; }
.done p svg { margin: 0 5px 0 1px; }
.done p span { height: auto; }
.bottomtabs { flex: 1; display: grid; grid-template-columns: 105px 180px 192px 140px 145px; text-align: center; line-height: 41px; }
.bottomtabs span:first-child { padding-right: 2px; }
.bottomtabs .on { margin-top: -2px; border: 2px solid #d2d4d8; border-top: 0; border-radius: 0 0 7px 7px; background: #f7f9f8; color: #0079c8; padding-right: 8px; line-height: 43px; height: 42px; }
```
